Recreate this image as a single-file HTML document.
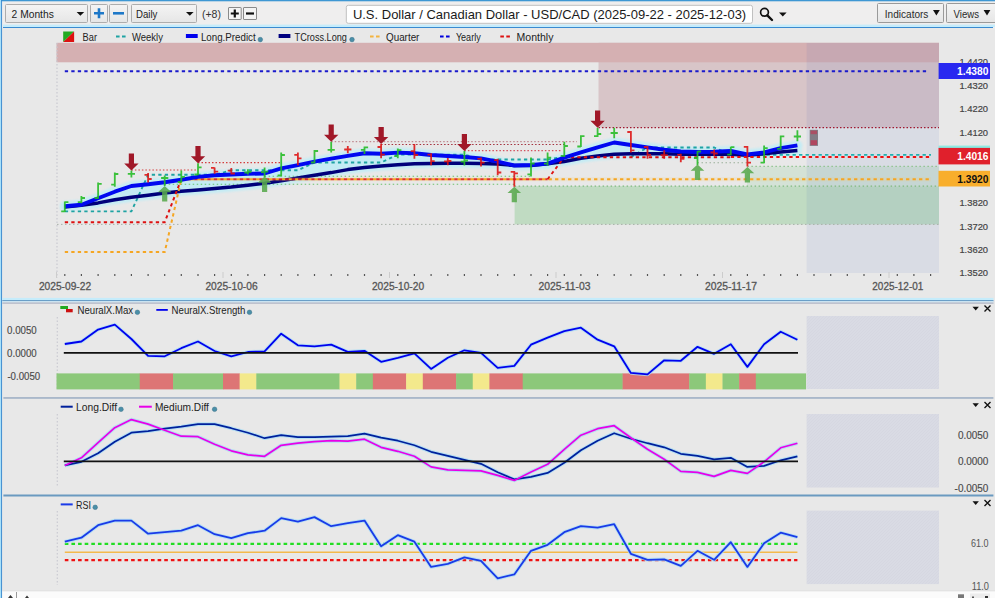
<!DOCTYPE html>
<html><head><meta charset="utf-8"><title>USD/CAD chart</title>
<style>html,body{margin:0;padding:0;background:#e8e8e8;overflow:hidden}svg text{font-family:"Liberation Sans",sans-serif}</style></head>
<body>
<svg width="995" height="598" viewBox="0 0 995 598" style="display:block">
<defs><pattern id="hatch" width="3" height="3" patternUnits="userSpaceOnUse"><rect width="3" height="3" fill="#d9dbe4"/><path d="M0,3 L3,0" stroke="#d3d5df" stroke-width="0.6"/></pattern>
<filter id="soft" x="-5%" y="-5%" width="110%" height="110%"><feGaussianBlur stdDeviation="0.45"/></filter>
<filter id="glow" x="-5%" y="-50%" width="110%" height="200%"><feGaussianBlur stdDeviation="1.2"/></filter>
<linearGradient id="btn" x1="0" y1="0" x2="0" y2="1"><stop offset="0" stop-color="#f4f4f4"/><stop offset="1" stop-color="#e6e6e6"/></linearGradient></defs>
<rect x="0" y="0" width="995" height="598" fill="#e8e8e8"/>
<rect x="0" y="0" width="995" height="28" fill="#efeeee"/>
<rect x="0" y="0" width="995" height="1.3" fill="#3e97d3"/>
<rect x="3" y="24.6" width="992" height="2.4" fill="#c5ecfb"/>
<rect x="3" y="27" width="990" height="1" fill="#3a8ad0"/>
<rect x="0" y="0" width="1.1" height="598" fill="#a8e1fa"/>
<rect x="1.1" y="0" width="0.95" height="598" fill="#3a8ad0"/>
<rect x="5.5" y="4.5" width="82" height="18" rx="1" fill="url(#btn)" stroke="#adadad" stroke-width="1"/>
<text x="11.6" y="17.8" font-family="Liberation Sans, sans-serif" font-size="11.5" fill="#222" text-anchor="start" font-weight="normal" textLength="42.2" lengthAdjust="spacingAndGlyphs" >2 Months</text>
<path d="M76.6,12 L84.2,12 L80.4,15.8 Z" fill="#111"/>
<rect x="90.5" y="4.5" width="17" height="18" rx="1" fill="url(#btn)" stroke="#adadad" stroke-width="1"/>
<path d="M94,13.3 H104 M99,8.3 V18.3" stroke="#1e78c8" stroke-width="2.6"/>
<rect x="109.5" y="4.5" width="18" height="18" rx="1" fill="url(#btn)" stroke="#adadad" stroke-width="1"/>
<path d="M113,13.3 H124" stroke="#1e78c8" stroke-width="2.6"/>
<rect x="131.5" y="4.5" width="65" height="18" rx="1" fill="url(#btn)" stroke="#adadad" stroke-width="1"/>
<text x="136.0" y="17.8" font-family="Liberation Sans, sans-serif" font-size="11.5" fill="#222" text-anchor="start" font-weight="normal" textLength="21.4" lengthAdjust="spacingAndGlyphs" >Daily</text>
<path d="M186,12 L193.6,12 L189.8,15.8 Z" fill="#111"/>
<text x="201.9" y="17.5" font-family="Liberation Sans, sans-serif" font-size="10.5" fill="#333" text-anchor="start" font-weight="normal" textLength="19.0" lengthAdjust="spacingAndGlyphs" >(+8)</text>
<rect x="228.5" y="7.5" width="12.7" height="12" rx="0.5" fill="#f4f4f4" stroke="#8a8a8a" stroke-width="1"/>
<path d="M230.8,13.5 H238.8 M234.8,9.5 V17.5" stroke="#111" stroke-width="2.2"/>
<rect x="243.5" y="7.5" width="13" height="12" rx="0.5" fill="#f4f4f4" stroke="#8a8a8a" stroke-width="1"/>
<path d="M246,13.5 H254" stroke="#111" stroke-width="2.2"/>
<rect x="346.3" y="5.3" width="406.2" height="18" rx="2" fill="#ffffff" stroke="#c0c0c0" stroke-width="1"/>
<text x="352.9" y="19.4" font-family="Liberation Sans, sans-serif" font-size="13" fill="#1a1a1a" text-anchor="start" font-weight="normal" textLength="393.3" lengthAdjust="spacingAndGlyphs" >U.S. Dollar / Canadian Dollar - USD/CAD (2025-09-22 - 2025-12-03)</text>
<circle cx="764.5" cy="12.3" r="3.9" fill="none" stroke="#111" stroke-width="1.7"/><path d="M767.3,15.3 L772,20" stroke="#111" stroke-width="2.4" stroke-linecap="round"/>
<path d="M779,12.6 L786.6,12.6 L782.8,16.4 Z" fill="#111"/>
<rect x="877.5" y="3.5" width="66" height="19" rx="1" fill="url(#btn)" stroke="#9a9a9a" stroke-width="1"/>
<text x="884.8" y="17.8" font-family="Liberation Sans, sans-serif" font-size="10.5" fill="#2a2a2a" text-anchor="start" font-weight="normal" textLength="43.6" lengthAdjust="spacingAndGlyphs" >Indicators</text>
<path d="M933,10 L939.8,10 L936.4,15.6 Z" fill="#111"/>
<rect x="946.5" y="3.5" width="52" height="19" rx="1" fill="url(#btn)" stroke="#9a9a9a" stroke-width="1"/>
<text x="953.6" y="17.8" font-family="Liberation Sans, sans-serif" font-size="10.5" fill="#2a2a2a" text-anchor="start" font-weight="normal" textLength="25.5" lengthAdjust="spacingAndGlyphs" >Views</text>
<path d="M983.6,10 L990.4,10 L987,15.6 Z" fill="#111"/>
<path d="M63.2,31.6 H74.1 L63.2,42 Z" fill="#22aa22"/><path d="M74.1,31.6 V42 H63.2 Z" fill="#dd1111"/>
<text x="82.6" y="40.8" font-family="Liberation Sans, sans-serif" font-size="10.5" fill="#222" text-anchor="start" font-weight="normal" textLength="14.4" lengthAdjust="spacingAndGlyphs" >Bar</text>
<path d="M116,36.5 h3.6 m2.4,0 h3.6" stroke="#1fa3a3" stroke-width="2"/>
<text x="131.9" y="40.8" font-family="Liberation Sans, sans-serif" font-size="10.5" fill="#222" text-anchor="start" font-weight="normal" textLength="31.0" lengthAdjust="spacingAndGlyphs" >Weekly</text>
<rect x="185.9" y="34" width="11.8" height="4" fill="#0000ee"/>
<text x="200.9" y="40.8" font-family="Liberation Sans, sans-serif" font-size="10.5" fill="#222" text-anchor="start" font-weight="normal" textLength="54.8" lengthAdjust="spacingAndGlyphs" >Long.Predict</text>
<circle cx="260.3" cy="39.6" r="2.3" fill="#4a8fa8" stroke="#3a7088" stroke-width="0.5"/>
<rect x="278.6" y="34" width="11.8" height="4" fill="#000080"/>
<text x="294.6" y="40.8" font-family="Liberation Sans, sans-serif" font-size="10.5" fill="#222" text-anchor="start" font-weight="normal" textLength="52.3" lengthAdjust="spacingAndGlyphs" >TCross.Long</text>
<circle cx="352" cy="39.6" r="2.3" fill="#4a8fa8" stroke="#3a7088" stroke-width="0.5"/>
<path d="M370,36.5 h3.6 m2.4,0 h3.6" stroke="#f3b440" stroke-width="2"/>
<text x="386.0" y="40.8" font-family="Liberation Sans, sans-serif" font-size="10.5" fill="#222" text-anchor="start" font-weight="normal" textLength="33.4" lengthAdjust="spacingAndGlyphs" >Quarter</text>
<path d="M440,36.5 h3.6 m2.4,0 h3.6" stroke="#0000dd" stroke-width="2"/>
<text x="455.9" y="40.8" font-family="Liberation Sans, sans-serif" font-size="10.5" fill="#222" text-anchor="start" font-weight="normal" textLength="24.8" lengthAdjust="spacingAndGlyphs" >Yearly</text>
<path d="M500.3,36.5 h3.6 m2.4,0 h3.6" stroke="#dd1111" stroke-width="2"/>
<text x="516.6" y="40.8" font-family="Liberation Sans, sans-serif" font-size="10.5" fill="#222" text-anchor="start" font-weight="normal" textLength="36.8" lengthAdjust="spacingAndGlyphs" >Monthly</text>
<rect x="598.5" y="42.8" width="340.5" height="84.9" fill="#d8c5c8"/>
<rect x="56.5" y="42.8" width="882.5" height="19.5" fill="#d5b0b2"/>
<rect x="514.6" y="186.2" width="424.4" height="38.2" fill="#c0dbc2"/>
<rect x="747" y="166.4" width="192" height="19.8" fill="#d4e2d6"/>
<rect x="806.6" y="43" width="132.39999999999998" height="230" fill="#143cb0" fill-opacity="0.065"/>
<path d="M57,43 V278" stroke="#c8c8d0" stroke-width="1.2" stroke-dasharray="1.5,2"/>
<path d="M57,224.4 H939" stroke="#a8b0a8" stroke-width="1" stroke-dasharray="1.5,2.5"/>
<path d="M598.5,127.7 H939" stroke="#a01830" stroke-width="1.3" stroke-dasharray="1.5,2"/>
<path d="M514.6,186.2 H939" stroke="#7fba7f" stroke-width="1.2" stroke-dasharray="1.5,2.5"/>
<path d="M747.4,166.4 H939" stroke="#8fc48f" stroke-width="1.2" stroke-dasharray="1.5,2.5"/>
<path d="M697.5,162.7 H747.4" stroke="#9ab09a" stroke-width="1.1" stroke-dasharray="1.5,2.5"/>
<g filter="url(#glow)" opacity="0.95"><polygon points="64.8,206.2 81.4,204.7 98.1,198.3 114.8,191.7 131.4,186.0 148.1,184.2 164.7,182.2 181.3,179.7 198.0,176.9 214.6,175.2 231.3,174.5 247.9,173.8 264.6,173.5 281.2,168.4 297.9,165.2 314.5,161.7 331.2,158.6 347.8,155.8 364.5,153.3 381.1,153.7 397.8,152.6 414.4,153.2 431.1,155.0 447.8,156.0 464.4,157.0 481.0,158.4 497.7,161.7 514.3,165.5 531.0,165.0 547.6,163.6 564.3,157.7 580.9,152.4 597.6,147.4 614.2,142.5 630.9,145.0 647.5,147.4 664.2,149.8 680.8,151.5 697.5,152.0 714.1,151.7 730.8,151.0 747.4,154.5 764.1,152.4 780.7,148.2 797.4,145.4 797.4,150.6 780.7,152.0 764.1,153.8 747.4,155.3 730.8,154.2 714.1,154.2 697.5,154.3 680.8,154.3 664.2,153.8 647.5,153.8 630.9,153.8 614.2,154.2 597.6,155.9 580.9,158.3 564.3,161.5 547.6,163.8 531.0,165.5 514.3,165.5 497.7,164.0 481.0,163.5 464.4,163.3 447.8,163.3 431.1,163.5 414.4,163.8 397.8,164.7 381.1,165.9 364.5,167.5 347.8,169.6 331.2,172.6 314.5,175.2 297.9,178.0 281.2,180.8 264.6,183.3 247.9,185.3 231.3,187.1 214.6,188.5 198.0,190.0 181.3,191.2 164.7,193.0 148.1,195.2 131.4,197.3 114.8,199.7 98.1,202.9 81.4,205.3 64.8,207.1" fill="#c2ecf5"/>
<polyline points="64.8,207.1 81.4,205.3 98.1,202.9 114.8,199.7 131.4,197.3 148.1,195.2 164.7,193.0 181.3,191.2 198.0,190.0 214.6,188.5 231.3,187.1 247.9,185.3 264.6,183.3 281.2,180.8 297.9,178.0 314.5,175.2 331.2,172.6 347.8,169.6 364.5,167.5 381.1,165.9 397.8,164.7 414.4,163.8 431.1,163.5 447.8,163.3 464.4,163.3 481.0,163.5 497.7,164.0 514.3,165.5 531.0,165.5 547.6,163.8 564.3,161.5 580.9,158.3 597.6,155.9 614.2,154.2 630.9,153.8 647.5,153.8 664.2,153.8 680.8,154.3 697.5,154.3 714.1,154.2 730.8,154.2 747.4,155.3 764.1,153.8 780.7,152.0 797.4,150.6" fill="none" stroke="#c2ecf5" stroke-width="9" stroke-linejoin="round" stroke-linecap="round"/>
<polyline points="64.8,206.2 81.4,204.7 98.1,198.3 114.8,191.7 131.4,186.0 148.1,184.2 164.7,182.2 181.3,179.7 198.0,176.9 214.6,175.2 231.3,174.5 247.9,173.8 264.6,173.5 281.2,168.4 297.9,165.2 314.5,161.7 331.2,158.6 347.8,155.8 364.5,153.3 381.1,153.7 397.8,152.6 414.4,153.2 431.1,155.0 447.8,156.0 464.4,157.0 481.0,158.4 497.7,161.7 514.3,165.5 531.0,165.0 547.6,163.6 564.3,157.7 580.9,152.4 597.6,147.4 614.2,142.5 630.9,145.0 647.5,147.4 664.2,149.8 680.8,151.5 697.5,152.0 714.1,151.7 730.8,151.0 747.4,154.5 764.1,152.4 780.7,148.2 797.4,145.4" fill="none" stroke="#c2ecf5" stroke-width="10" stroke-linejoin="round" stroke-linecap="round"/></g>
<path d="M131.4,170 H198.0" stroke="#d02020" stroke-width="1.1" stroke-dasharray="1.5,2" opacity="0.85"/>
<path d="M198.0,162.6 H281.2" stroke="#d02020" stroke-width="1.1" stroke-dasharray="1.5,2" opacity="0.85"/>
<path d="M331.2,141.6 H576.9" stroke="#b87880" stroke-width="1.1" stroke-dasharray="1.5,2" opacity="0.85"/>
<path d="M381.1,144.5 H564.3" stroke="#981020" stroke-width="1.1" stroke-dasharray="1.5,2" opacity="0.85"/>
<path d="M464.4,150.6 H562.3" stroke="#d03848" stroke-width="1.1" stroke-dasharray="1.5,2" opacity="0.85"/>
<path d="M164.7,184.3 H514.3" stroke="#55bb55" stroke-width="1.1" stroke-dasharray="1.5,2.5" opacity="0.85"/>
<path d="M264.6,176.2 H531.0" stroke="#55bb55" stroke-width="1.1" stroke-dasharray="1.5,2.5" opacity="0.85"/>
<path d="M64.8,211.4 H131.4 L148.1,174.8 H214.6 L231.3,170.3 H297.9 L314.5,162.5 H381.1 L397.8,154.6 H464.4 L481.0,159.5 H547.6" fill="none" stroke="#1fa3a3" stroke-width="1.9" stroke-dasharray="3.3,3.2"/>
<path d="M547.6,159.5 L564.3,157" fill="none" stroke="#1fa3a3" stroke-width="1.9" stroke-dasharray="3.3,3.2"/>
<path d="M630.9,157 L647.5,147.5 H714.1 L730.8,154.8" fill="none" stroke="#1fa3a3" stroke-width="1.9" stroke-dasharray="3.3,3.2"/>
<path d="M730.8,154.8 H931" fill="none" stroke="#1fb0b0" stroke-width="1.8" stroke-dasharray="3.3,3.2" stroke-dashoffset="3.25"/>
<polyline points="64.8,207.1 81.4,205.3 98.1,202.9 114.8,199.7 131.4,197.3 148.1,195.2 164.7,193.0 181.3,191.2 198.0,190.0 214.6,188.5 231.3,187.1 247.9,185.3 264.6,183.3 281.2,180.8 297.9,178.0 314.5,175.2 331.2,172.6 347.8,169.6 364.5,167.5 381.1,165.9 397.8,164.7 414.4,163.8 431.1,163.5 447.8,163.3 464.4,163.3 481.0,163.5 497.7,164.0 514.3,165.5 531.0,165.5 547.6,163.8 564.3,161.5 580.9,158.3 597.6,155.9 614.2,154.2 630.9,153.8 647.5,153.8 664.2,153.8 680.8,154.3 697.5,154.3 714.1,154.2 730.8,154.2 747.4,155.3 764.1,153.8 780.7,152.0 797.4,150.6" fill="none" stroke="#00007a" stroke-width="3.5" stroke-linejoin="round" stroke-linecap="butt"/>
<path d="M64.8,252.1 H164.7 L181.3,179.2" fill="none" stroke="#f5a623" stroke-width="2" stroke-dasharray="3.3,3.2"/>
<path d="M181.3,179.2 H931" fill="none" stroke="#f9c86a" stroke-width="4" opacity="0.18"/>
<path d="M181.3,179.2 H931" fill="none" stroke="#f5a623" stroke-width="2" stroke-dasharray="3.3,3.2" stroke-dashoffset="3.25"/>
<path d="M64.8,71.2 H928" fill="none" stroke="#1a1acc" stroke-width="1.9" stroke-dasharray="3.3,3.2"/>
<path d="M64.8,222.3 H164.7 L181.3,179.2" fill="none" stroke="#dd1111" stroke-width="2" stroke-dasharray="3.3,3.2"/>
<path d="M181.3,179.2 H547.6" fill="none" stroke="#dd1111" stroke-width="1.9" stroke-dasharray="3.3,3.2" opacity="0.85"/>
<path d="M547.6,179.2 L564.3,157.2" fill="none" stroke="#dd1111" stroke-width="1.8" stroke-dasharray="3.3,3.2"/>
<path d="M564.3,157.2 H730.8" fill="none" stroke="#dd1111" stroke-width="2" stroke-dasharray="3.3,3.2"/>
<path d="M730.8,157 H931" fill="none" stroke="#ee1111" stroke-width="2" stroke-dasharray="3.3,3.2"/>
<polyline points="64.8,206.2 81.4,204.7 98.1,198.3 114.8,191.7 131.4,186.0 148.1,184.2 164.7,182.2 181.3,179.7 198.0,176.9 214.6,175.2 231.3,174.5 247.9,173.8 264.6,173.5 281.2,168.4 297.9,165.2 314.5,161.7 331.2,158.6 347.8,155.8 364.5,153.3 381.1,153.7 397.8,152.6 414.4,153.2 431.1,155.0 447.8,156.0 464.4,157.0 481.0,158.4 497.7,161.7 514.3,165.5 531.0,165.0 547.6,163.6 564.3,157.7 580.9,152.4 597.6,147.4 614.2,142.5 630.9,145.0 647.5,147.4 664.2,149.8 680.8,151.5 697.5,152.0 714.1,151.7 730.8,151.0 747.4,154.5 764.1,152.4 780.7,148.2 797.4,145.4" fill="none" stroke="#0008f0" stroke-width="3.9" stroke-linejoin="round" stroke-linecap="butt"/>
<path d="M64.8,201.5 V212 M61.2,211.4 H64.8 M64.8,202.2 H68.4" stroke="#22bb22" stroke-width="1.8" fill="none" opacity="0.88"/>
<path d="M81.4,195.9 V203.3 M77.8,202.2 H81.4 M81.4,198 H85.0" stroke="#22bb22" stroke-width="1.8" fill="none" opacity="0.88"/>
<path d="M98.1,182.5 V198.7 M94.5,198 H98.1 M98.1,183.9 H101.7" stroke="#22bb22" stroke-width="1.8" fill="none" opacity="0.88"/>
<path d="M114.8,172.4 V186.7 M111.2,184.6 H114.8 M114.8,174 H118.3" stroke="#22bb22" stroke-width="1.8" fill="none" opacity="0.88"/>
<path d="M131.4,170.6 V177.6 M127.8,173.8 H131.4 M131.4,173.8 H135.0" stroke="#22bb22" stroke-width="1.8" fill="none" opacity="0.88"/>
<path d="M148.1,173 V182.5 M144.5,174.8 H148.1 M148.1,179 H151.7" stroke="#dd1111" stroke-width="1.8" fill="none" opacity="0.88"/>
<path d="M164.7,175.5 V186 M161.1,178 H164.7 M164.7,178 H168.3" stroke="#22bb22" stroke-width="1.8" fill="none" opacity="0.88"/>
<path d="M181.3,170.6 V182.5 M177.7,182 H181.3 M181.3,176.9 H184.9" stroke="#22bb22" stroke-width="1.8" fill="none" opacity="0.88"/>
<path d="M198.0,163.2 V175.2 M194.4,174.5 H198.0 M198.0,167.4 H201.6" stroke="#22bb22" stroke-width="1.8" fill="none" opacity="0.88"/>
<path d="M214.6,167.4 V173.8 M211.0,167.9 H214.6 M214.6,171.7 H218.2" stroke="#dd1111" stroke-width="1.8" fill="none" opacity="0.88"/>
<path d="M231.3,168.1 V174.5 M227.7,170.7 H231.3 M231.3,173.5 H234.9" stroke="#dd1111" stroke-width="1.8" fill="none" opacity="0.88"/>
<path d="M247.9,169.3 V174.5 M244.3,172.5 H247.9 M247.9,171.8 H251.5" stroke="#22bb22" stroke-width="1.8" fill="none" opacity="0.88"/>
<path d="M264.6,167.4 V177 M261.0,172.2 H264.6 M264.6,171.7 H268.2" stroke="#22bb22" stroke-width="1.8" fill="none" opacity="0.88"/>
<path d="M281.2,152.4 V176 M277.6,175.5 H281.2 M281.2,155 H284.9" stroke="#22bb22" stroke-width="1.8" fill="none" opacity="0.88"/>
<path d="M297.9,152.4 V165.3 M294.3,154.8 H297.9 M297.9,158.3 H301.5" stroke="#dd1111" stroke-width="1.8" fill="none" opacity="0.88"/>
<path d="M314.5,150.1 V163.2 M310.9,162.5 H314.5 M314.5,151 H318.1" stroke="#22bb22" stroke-width="1.8" fill="none" opacity="0.88"/>
<path d="M331.2,141.8 V152.6 M327.6,149.8 H331.2 M331.2,149.8 H334.8" stroke="#22bb22" stroke-width="1.8" fill="none" opacity="0.88"/>
<path d="M347.8,146 V153.3 M344.2,149.5 H347.8 M347.8,149.5 H351.4" stroke="#dd1111" stroke-width="1.8" fill="none" opacity="0.88"/>
<path d="M364.5,146.5 V154 M360.9,149.8 H364.5 M364.5,147.4 H368.1" stroke="#22bb22" stroke-width="1.8" fill="none" opacity="0.88"/>
<path d="M381.1,144.1 V158.2 M377.5,147 H381.1 M381.1,154.7 H384.8" stroke="#dd1111" stroke-width="1.8" fill="none" opacity="0.88"/>
<path d="M397.8,148.4 V158.2 M394.2,156.1 H397.8 M397.8,150.2 H401.4" stroke="#22bb22" stroke-width="1.8" fill="none" opacity="0.88"/>
<path d="M414.4,144.1 V158.8 M410.8,151.1 H414.4 M414.4,155 H418.1" stroke="#dd1111" stroke-width="1.8" fill="none" opacity="0.88"/>
<path d="M431.1,153.2 V165.2 M427.5,154.6 H431.1 M431.1,161.2 H434.7" stroke="#dd1111" stroke-width="1.8" fill="none" opacity="0.88"/>
<path d="M447.8,158.1 V165.2 M444.1,161.3 H447.8 M447.8,161 H451.4" stroke="#dd1111" stroke-width="1.8" fill="none" opacity="0.88"/>
<path d="M464.4,151.1 V165.5 M460.8,161.7 H464.4 M464.4,160.5 H468.0" stroke="#22bb22" stroke-width="1.8" fill="none" opacity="0.88"/>
<path d="M481.0,157.4 V166.6 M477.4,158.8 H481.0 M481.0,162.6 H484.6" stroke="#dd1111" stroke-width="1.8" fill="none" opacity="0.88"/>
<path d="M497.7,158.8 V175.3 M494.1,160.2 H497.7 M497.7,172.5 H501.3" stroke="#dd1111" stroke-width="1.8" fill="none" opacity="0.88"/>
<path d="M514.3,171.1 V186.7 M510.7,171.9 H514.3 M514.3,173.3 H517.9" stroke="#dd1111" stroke-width="1.8" fill="none" opacity="0.88"/>
<path d="M531.0,157.4 V176.4 M527.4,174.3 H531.0 M531.0,163.5 H534.6" stroke="#22bb22" stroke-width="1.8" fill="none" opacity="0.88"/>
<path d="M547.6,152.4 V165.7 M544.0,163.6 H547.6 M547.6,157.7 H551.2" stroke="#22bb22" stroke-width="1.8" fill="none" opacity="0.88"/>
<path d="M564.3,141.8 V156.9 M560.7,155.9 H564.3 M564.3,146 H567.9" stroke="#22bb22" stroke-width="1.8" fill="none" opacity="0.88"/>
<path d="M580.9,135.2 V147 M577.3,146.5 H580.9 M580.9,136.2 H584.5" stroke="#22bb22" stroke-width="1.8" fill="none" opacity="0.88"/>
<path d="M597.6,127.7 V136.9 M594.0,136.2 H597.6 M597.6,134 H601.2" stroke="#22bb22" stroke-width="1.8" fill="none" opacity="0.88"/>
<path d="M614.2,127.7 V138.3 M610.6,133 H614.2 M614.2,133 H617.8" stroke="#22bb22" stroke-width="1.8" fill="none" opacity="0.88"/>
<path d="M630.9,131 V152.6 M627.3,132 H630.9 M630.9,150.3 H634.5" stroke="#dd1111" stroke-width="1.8" fill="none" opacity="0.88"/>
<path d="M647.5,146 V158.7 M643.9,147 H647.5 M647.5,154.9 H651.1" stroke="#dd1111" stroke-width="1.8" fill="none" opacity="0.88"/>
<path d="M664.2,150.3 V158.7 M660.6,155.2 H664.2 M664.2,155.2 H667.8" stroke="#dd1111" stroke-width="1.8" fill="none" opacity="0.88"/>
<path d="M680.8,153.8 V162.3 M677.2,154.8 H680.8 M680.8,158.8 H684.4" stroke="#dd1111" stroke-width="1.8" fill="none" opacity="0.88"/>
<path d="M697.5,151 V165 M693.9,158 H697.5 M697.5,151.5 H701.1" stroke="#22bb22" stroke-width="1.8" fill="none" opacity="0.88"/>
<path d="M714.1,149.6 V156 M710.5,152.5 H714.1 M714.1,153.5 H717.7" stroke="#dd1111" stroke-width="1.8" fill="none" opacity="0.88"/>
<path d="M730.8,146.8 V155.3 M727.2,154.6 H730.8 M730.8,147.2 H734.4" stroke="#22bb22" stroke-width="1.8" fill="none" opacity="0.88"/>
<path d="M747.4,146.1 V166.5 M743.8,146.8 H747.4 M747.4,162.7 H751.0" stroke="#dd1111" stroke-width="1.8" fill="none" opacity="0.88"/>
<path d="M764.1,145.4 V163.3 M760.5,162.7 H764.1 M764.1,148.2 H767.7" stroke="#22bb22" stroke-width="1.8" fill="none" opacity="0.88"/>
<path d="M780.7,135.6 V149.6 M777.1,148.9 H780.7 M780.7,136.3 H784.3" stroke="#22bb22" stroke-width="1.8" fill="none" opacity="0.88"/>
<path d="M797.4,130.3 V141.2 M793.8,136.5 H797.4 M797.4,136.5 H801.0" stroke="#22bb22" stroke-width="1.8" fill="none" opacity="0.88"/>
<path d="M128.8,153.4 H134.0 V163.6 H138.6 L131.4,170.6 L124.2,163.6 H128.8 Z" fill="#a01828"/>
<path d="M195.4,146.0 H200.6 V156.2 H205.2 L198.0,163.2 L190.8,156.2 H195.4 Z" fill="#a01828"/>
<path d="M328.6,124.6 H333.8 V134.8 H338.4 L331.2,141.8 L324.0,134.8 H328.6 Z" fill="#a01828"/>
<path d="M378.5,126.9 H383.8 V137.1 H388.3 L381.1,144.1 L373.9,137.1 H378.5 Z" fill="#a01828"/>
<path d="M461.8,133.9 H467.0 V144.1 H471.6 L464.4,151.1 L457.2,144.1 H461.8 Z" fill="#a01828"/>
<path d="M595.0,110.5 H600.2 V120.7 H604.8 L597.6,127.7 L590.4,120.7 H595.0 Z" fill="#a01828"/>
<path d="M162.1,201.6 H167.3 V192.3 H171.5 L164.7,186.0 L157.9,192.3 H162.1 Z" fill="#58a84c" fill-opacity="0.88"/>
<path d="M262.0,192.1 H267.2 V182.8 H271.4 L264.6,176.5 L257.8,182.8 H262.0 Z" fill="#58a84c" fill-opacity="0.88"/>
<path d="M511.7,202.3 H516.9 V193.0 H521.1 L514.3,186.7 L507.5,193.0 H511.7 Z" fill="#58a84c" fill-opacity="0.88"/>
<path d="M694.9,180.0 H700.1 V170.7 H704.3 L697.5,164.4 L690.7,170.7 H694.9 Z" fill="#58a84c" fill-opacity="0.88"/>
<path d="M744.8,182.5 H750.0 V173.2 H754.2 L747.4,166.9 L740.6,173.2 H744.8 Z" fill="#58a84c" fill-opacity="0.88"/>
<rect x="809.7" y="129.8" width="8.3" height="16.1" fill="#827d86"/><g filter="url(#soft)"><rect x="810.6" y="130.6" width="6.4" height="3.6" fill="#c4304e" opacity="0.6"/><rect x="810.6" y="140.2" width="6.4" height="4.9" fill="#c4304e" opacity="0.7"/></g>
<path d="M64.8,274 v2 M81.4,274 v2 M98.1,274 v2 M114.8,274 v2 M131.4,274 v2 M148.1,274 v2 M164.7,274 v2 M181.3,274 v2 M198.0,274 v2 M214.6,274 v2 M231.3,274 v2 M247.9,274 v2 M264.6,274 v2 M281.2,274 v2 M297.9,274 v2 M314.5,274 v2 M331.2,274 v2 M347.8,274 v2 M364.5,274 v2 M381.1,274 v2 M397.8,274 v2 M414.4,274 v2 M431.1,274 v2 M447.8,274 v2 M464.4,274 v2 M481.0,274 v2 M497.7,274 v2 M514.3,274 v2 M531.0,274 v2 M547.6,274 v2 M564.3,274 v2 M580.9,274 v2 M597.6,274 v2 M614.2,274 v2 M630.9,274 v2 M647.5,274 v2 M664.2,274 v2 M680.8,274 v2 M697.5,274 v2 M714.1,274 v2 M730.8,274 v2 M747.4,274 v2 M764.1,274 v2 M780.7,274 v2 M797.4,274 v2 M814.0,274 v2 M830.7,274 v2 M847.3,274 v2 M864.0,274 v2 M880.6,274 v2 M897.3,274 v2 M913.9,274 v2 M930.6,274 v2 " stroke="#555" stroke-width="1.2"/>
<path d="M56.5,272 v6 M223.0,272 v6 M389.5,272 v6 M556.0,272 v6 M722.5,272 v6 M889.0,272 v6 " stroke="#ccc" stroke-width="1"/>
<text x="38.9" y="290.4" font-family="Liberation Sans, sans-serif" font-size="10.8" fill="#555" text-anchor="start" font-weight="normal" textLength="52.2" lengthAdjust="spacingAndGlyphs" stroke="#555" stroke-width="0.3">2025-09-22</text>
<text x="205.4" y="290.4" font-family="Liberation Sans, sans-serif" font-size="10.8" fill="#555" text-anchor="start" font-weight="normal" textLength="52.2" lengthAdjust="spacingAndGlyphs" stroke="#555" stroke-width="0.3">2025-10-06</text>
<text x="371.9" y="290.4" font-family="Liberation Sans, sans-serif" font-size="10.8" fill="#555" text-anchor="start" font-weight="normal" textLength="52.2" lengthAdjust="spacingAndGlyphs" stroke="#555" stroke-width="0.3">2025-10-20</text>
<text x="538.4" y="290.4" font-family="Liberation Sans, sans-serif" font-size="10.8" fill="#555" text-anchor="start" font-weight="normal" textLength="52.2" lengthAdjust="spacingAndGlyphs" stroke="#555" stroke-width="0.3">2025-11-03</text>
<text x="704.9" y="290.4" font-family="Liberation Sans, sans-serif" font-size="10.8" fill="#555" text-anchor="start" font-weight="normal" textLength="52.2" lengthAdjust="spacingAndGlyphs" stroke="#555" stroke-width="0.3">2025-11-17</text>
<text x="872.3" y="290.4" font-family="Liberation Sans, sans-serif" font-size="10.8" fill="#555" text-anchor="start" font-weight="normal" textLength="51.0" lengthAdjust="spacingAndGlyphs" stroke="#555" stroke-width="0.3">2025-12-01</text>
<text x="959.4" y="65.4" font-family="Liberation Sans, sans-serif" font-size="9.8" fill="#444" text-anchor="start" font-weight="normal" textLength="28.7" lengthAdjust="spacingAndGlyphs" stroke="#444" stroke-width="0.2">1.4420</text>
<text x="959.4" y="88.8" font-family="Liberation Sans, sans-serif" font-size="9.8" fill="#444" text-anchor="start" font-weight="normal" textLength="28.7" lengthAdjust="spacingAndGlyphs" stroke="#444" stroke-width="0.2">1.4320</text>
<text x="959.4" y="112.3" font-family="Liberation Sans, sans-serif" font-size="9.8" fill="#444" text-anchor="start" font-weight="normal" textLength="28.7" lengthAdjust="spacingAndGlyphs" stroke="#444" stroke-width="0.2">1.4220</text>
<text x="959.4" y="135.7" font-family="Liberation Sans, sans-serif" font-size="9.8" fill="#444" text-anchor="start" font-weight="normal" textLength="28.7" lengthAdjust="spacingAndGlyphs" stroke="#444" stroke-width="0.2">1.4120</text>
<text x="959.4" y="206.0" font-family="Liberation Sans, sans-serif" font-size="9.8" fill="#444" text-anchor="start" font-weight="normal" textLength="28.7" lengthAdjust="spacingAndGlyphs" stroke="#444" stroke-width="0.2">1.3820</text>
<text x="959.4" y="229.5" font-family="Liberation Sans, sans-serif" font-size="9.8" fill="#444" text-anchor="start" font-weight="normal" textLength="28.7" lengthAdjust="spacingAndGlyphs" stroke="#444" stroke-width="0.2">1.3720</text>
<text x="959.4" y="252.9" font-family="Liberation Sans, sans-serif" font-size="9.8" fill="#444" text-anchor="start" font-weight="normal" textLength="28.7" lengthAdjust="spacingAndGlyphs" stroke="#444" stroke-width="0.2">1.3620</text>
<text x="959.4" y="276.4" font-family="Liberation Sans, sans-serif" font-size="9.8" fill="#444" text-anchor="start" font-weight="normal" textLength="28.7" lengthAdjust="spacingAndGlyphs" stroke="#444" stroke-width="0.2">1.3520</text>
<rect x="938.6" y="63" width="51.4" height="16" fill="#2828f0"/>
<text x="957.1" y="75" font-family="Liberation Sans, sans-serif" font-size="10" fill="#fff" text-anchor="start" font-weight="bold" textLength="31.3" lengthAdjust="spacingAndGlyphs" >1.4380</text>
<rect x="938.5" y="145.6" width="51.5" height="2.6" fill="#8eeae2"/>
<rect x="938.5" y="147.9" width="51.5" height="16.5" fill="#e0202c"/>
<text x="957.2" y="160.2" font-family="Liberation Sans, sans-serif" font-size="10" fill="#fff" text-anchor="start" font-weight="bold" textLength="31.3" lengthAdjust="spacingAndGlyphs" >1.4016</text>
<rect x="938.5" y="170.8" width="51.5" height="15.7" fill="#f8ae2c"/>
<text x="957.2" y="182.8" font-family="Liberation Sans, sans-serif" font-size="10" fill="#111" text-anchor="start" font-weight="bold" textLength="31.3" lengthAdjust="spacingAndGlyphs" >1.3920</text>
<rect x="2.3" y="297.90000000000003" width="991.2" height="2.4" fill="#c5ecfb"/>
<rect x="2.3" y="300.3" width="991.2" height="1" fill="#3a7fb8"/>
<rect x="2.3" y="301.3" width="991.2" height="1.2" fill="#d6eefa"/>
<rect x="2.3" y="302.40000000000003" width="991.2" height="1.4" fill="#b4b9c8"/>
<path d="M972.5,306.8 h6.4 l-3.2,3.8 Z" fill="#111"/>
<path d="M984.5,305.6 l6,6 m0,-6 l-6,6" stroke="#111" stroke-width="1.35"/>
<rect x="60.3" y="306" width="7.7" height="3" fill="#22aa22"/><rect x="66" y="309" width="6.7" height="3.3" fill="#cc1111"/>
<text x="77.5" y="314" font-family="Liberation Sans, sans-serif" font-size="10.5" fill="#222" text-anchor="start" font-weight="normal" textLength="55.6" lengthAdjust="spacingAndGlyphs" >NeuralX.Max</text>
<circle cx="137.4" cy="312.3" r="2.3" fill="#4a8fa8" stroke="#3a7088" stroke-width="0.5"/>
<rect x="156.3" y="309" width="11.5" height="1.8" fill="#0000ee"/>
<text x="171.6" y="314" font-family="Liberation Sans, sans-serif" font-size="10.5" fill="#222" text-anchor="start" font-weight="normal" textLength="73.8" lengthAdjust="spacingAndGlyphs" >NeuralX.Strength</text>
<circle cx="249.5" cy="312.3" r="2.3" fill="#4a8fa8" stroke="#3a7088" stroke-width="0.5"/>
<path d="M57.3,317 V389" stroke="#cacad2" stroke-width="1.2" stroke-dasharray="1.5,2"/>
<rect x="806.6" y="316" width="132.4" height="73" fill="url(#hatch)"/>
<rect x="56.50" y="373.4" width="83.55" height="16" fill="#8cc87a"/>
<rect x="139.75" y="373.4" width="33.60" height="16" fill="#dd7575"/>
<rect x="173.05" y="373.4" width="50.25" height="16" fill="#8cc87a"/>
<rect x="223.00" y="373.4" width="16.95" height="16" fill="#dd7575"/>
<rect x="239.65" y="373.4" width="16.95" height="16" fill="#f3e98c"/>
<rect x="256.30" y="373.4" width="83.55" height="16" fill="#8cc87a"/>
<rect x="339.55" y="373.4" width="16.95" height="16" fill="#f3e98c"/>
<rect x="356.20" y="373.4" width="16.95" height="16" fill="#8cc87a"/>
<rect x="372.85" y="373.4" width="33.60" height="16" fill="#dd7575"/>
<rect x="406.15" y="373.4" width="16.95" height="16" fill="#f3e98c"/>
<rect x="422.80" y="373.4" width="33.60" height="16" fill="#dd7575"/>
<rect x="456.10" y="373.4" width="16.95" height="16" fill="#8cc87a"/>
<rect x="472.75" y="373.4" width="16.95" height="16" fill="#f3e98c"/>
<rect x="489.40" y="373.4" width="33.60" height="16" fill="#dd7575"/>
<rect x="522.70" y="373.4" width="100.20" height="16" fill="#8cc87a"/>
<rect x="622.60" y="373.4" width="66.90" height="16" fill="#dd7575"/>
<rect x="689.20" y="373.4" width="16.95" height="16" fill="#8cc87a"/>
<rect x="705.85" y="373.4" width="16.95" height="16" fill="#f3e98c"/>
<rect x="722.50" y="373.4" width="16.95" height="16" fill="#8cc87a"/>
<rect x="739.15" y="373.4" width="16.95" height="16" fill="#dd7575"/>
<rect x="755.80" y="373.4" width="50.25" height="16" fill="#8cc87a"/>
<polyline points="64.8,344.0 81.4,341.5 98.1,329.6 114.8,324.6 131.4,339.0 148.1,355.8 164.7,356.3 181.3,348.2 198.0,341.5 214.6,351.0 231.3,356.3 247.9,352.0 264.6,351.3 281.2,333.7 297.9,345.3 314.5,346.3 331.2,344.7 347.8,351.8 364.5,350.8 381.1,361.8 397.8,357.8 414.4,353.3 431.1,368.9 447.8,357.8 464.4,350.3 481.0,352.8 497.7,367.9 514.3,365.9 531.0,344.7 547.6,337.7 564.3,331.2 580.9,327.7 597.6,339.7 614.2,346.3 630.9,372.9 647.5,374.4 664.2,360.3 680.8,360.8 697.5,346.8 714.1,353.8 730.8,344.2 747.4,366.9 764.1,344.2 780.7,331.7 797.4,339.7" fill="none" stroke="#a8dcf5" stroke-width="3.6" stroke-linejoin="round" opacity="0.8"/>
<polyline points="64.8,344.0 81.4,341.5 98.1,329.6 114.8,324.6 131.4,339.0 148.1,355.8 164.7,356.3 181.3,348.2 198.0,341.5 214.6,351.0 231.3,356.3 247.9,352.0 264.6,351.3 281.2,333.7 297.9,345.3 314.5,346.3 331.2,344.7 347.8,351.8 364.5,350.8 381.1,361.8 397.8,357.8 414.4,353.3 431.1,368.9 447.8,357.8 464.4,350.3 481.0,352.8 497.7,367.9 514.3,365.9 531.0,344.7 547.6,337.7 564.3,331.2 580.9,327.7 597.6,339.7 614.2,346.3 630.9,372.9 647.5,374.4 664.2,360.3 680.8,360.8 697.5,346.8 714.1,353.8 730.8,344.2 747.4,366.9 764.1,344.2 780.7,331.7 797.4,339.7" fill="none" stroke="#0000ee" stroke-width="1.8" stroke-linejoin="round"/>
<path d="M63.8,352.8 H798.0" stroke="#111" stroke-width="1.7"/>
<text x="7.1" y="333.9" font-family="Liberation Sans, sans-serif" font-size="10" fill="#4a4a4a" text-anchor="start" font-weight="normal" textLength="29.6" lengthAdjust="spacingAndGlyphs" stroke="#4a4a4a" stroke-width="0.15">0.0050</text>
<text x="7.1" y="356.9" font-family="Liberation Sans, sans-serif" font-size="10" fill="#4a4a4a" text-anchor="start" font-weight="normal" textLength="29.6" lengthAdjust="spacingAndGlyphs" stroke="#4a4a4a" stroke-width="0.15">0.0000</text>
<text x="7.4" y="380.09999999999997" font-family="Liberation Sans, sans-serif" font-size="10" fill="#4a4a4a" text-anchor="start" font-weight="normal" textLength="32.8" lengthAdjust="spacingAndGlyphs" stroke="#4a4a4a" stroke-width="0.15">-0.0050</text>
<rect x="3.4" y="397.1" width="990" height="1.7" fill="#a3b3c7"/>
<path d="M972.5,403.2 h6.4 l-3.2,3.8 Z" fill="#111"/>
<path d="M984.5,402 l6,6 m0,-6 l-6,6" stroke="#111" stroke-width="1.35"/>
<rect x="60.7" y="405.7" width="12" height="2" fill="#00209c"/>
<text x="76.0" y="410.7" font-family="Liberation Sans, sans-serif" font-size="10.5" fill="#222" text-anchor="start" font-weight="normal" textLength="41.0" lengthAdjust="spacingAndGlyphs" >Long.Diff</text>
<circle cx="121" cy="409.3" r="2.3" fill="#4a8fa8" stroke="#3a7088" stroke-width="0.5"/>
<rect x="139" y="405.7" width="12.8" height="2" fill="#e800e8"/>
<text x="154.9" y="410.7" font-family="Liberation Sans, sans-serif" font-size="10.5" fill="#222" text-anchor="start" font-weight="normal" textLength="54.0" lengthAdjust="spacingAndGlyphs" >Medium.Diff</text>
<circle cx="214.6" cy="409.3" r="2.3" fill="#4a8fa8" stroke="#3a7088" stroke-width="0.5"/>
<path d="M57.3,414 V487" stroke="#cacad2" stroke-width="1.2" stroke-dasharray="1.5,2"/>
<rect x="806.6" y="414" width="132.4" height="73.5" fill="url(#hatch)"/>
<polyline points="64.8,465.4 81.4,461.8 98.1,453.3 114.8,441.7 131.4,432.7 148.1,431.2 164.7,428.7 181.3,426.7 198.0,424.1 214.6,424.1 231.3,428.2 247.9,432.7 264.6,438.2 281.2,435.2 297.9,437.2 314.5,437.2 331.2,436.7 347.8,436.2 364.5,433.7 381.1,437.7 397.8,440.7 414.4,445.3 431.1,451.8 447.8,455.8 464.4,459.8 481.0,463.8 497.7,472.2 514.3,479.4 531.0,476.9 547.6,472.9 564.3,462.8 580.9,450.3 597.6,440.7 614.2,433.2 630.9,438.7 647.5,443.2 664.2,447.3 680.8,453.8 697.5,455.8 714.1,459.3 730.8,457.8 747.4,466.9 764.1,465.9 780.7,460.3 797.4,456.3" fill="none" stroke="#a8dcf5" stroke-width="3.6" stroke-linejoin="round" opacity="0.8"/>
<polyline points="64.8,465.4 81.4,457.8 98.1,442.7 114.8,427.7 131.4,419.6 148.1,424.1 164.7,430.2 181.3,436.2 198.0,436.7 214.6,444.2 231.3,450.8 247.9,454.8 264.6,456.3 281.2,445.3 297.9,443.2 314.5,441.7 331.2,440.7 347.8,441.2 364.5,439.2 381.1,447.3 397.8,451.3 414.4,456.3 431.1,466.9 447.8,469.9 464.4,470.4 481.0,470.9 497.7,475.4 514.3,480.4 531.0,471.9 547.6,464.3 564.3,449.3 580.9,435.2 597.6,428.7 614.2,425.7 630.9,437.7 647.5,449.3 664.2,459.3 680.8,471.4 697.5,472.4 714.1,476.4 730.8,470.4 747.4,473.4 764.1,461.8 780.7,447.8 797.4,443.2" fill="none" stroke="#a8dcf5" stroke-width="3.6" stroke-linejoin="round" opacity="0.8"/>
<polyline points="64.8,465.4 81.4,461.8 98.1,453.3 114.8,441.7 131.4,432.7 148.1,431.2 164.7,428.7 181.3,426.7 198.0,424.1 214.6,424.1 231.3,428.2 247.9,432.7 264.6,438.2 281.2,435.2 297.9,437.2 314.5,437.2 331.2,436.7 347.8,436.2 364.5,433.7 381.1,437.7 397.8,440.7 414.4,445.3 431.1,451.8 447.8,455.8 464.4,459.8 481.0,463.8 497.7,472.2 514.3,479.4 531.0,476.9 547.6,472.9 564.3,462.8 580.9,450.3 597.6,440.7 614.2,433.2 630.9,438.7 647.5,443.2 664.2,447.3 680.8,453.8 697.5,455.8 714.1,459.3 730.8,457.8 747.4,466.9 764.1,465.9 780.7,460.3 797.4,456.3" fill="none" stroke="#00209c" stroke-width="1.7" stroke-linejoin="round"/>
<polyline points="64.8,465.4 81.4,457.8 98.1,442.7 114.8,427.7 131.4,419.6 148.1,424.1 164.7,430.2 181.3,436.2 198.0,436.7 214.6,444.2 231.3,450.8 247.9,454.8 264.6,456.3 281.2,445.3 297.9,443.2 314.5,441.7 331.2,440.7 347.8,441.2 364.5,439.2 381.1,447.3 397.8,451.3 414.4,456.3 431.1,466.9 447.8,469.9 464.4,470.4 481.0,470.9 497.7,475.4 514.3,480.4 531.0,471.9 547.6,464.3 564.3,449.3 580.9,435.2 597.6,428.7 614.2,425.7 630.9,437.7 647.5,449.3 664.2,459.3 680.8,471.4 697.5,472.4 714.1,476.4 730.8,470.4 747.4,473.4 764.1,461.8 780.7,447.8 797.4,443.2" fill="none" stroke="#e800e8" stroke-width="1.7" stroke-linejoin="round"/>
<path d="M63.8,461.3 H798.0" stroke="#111" stroke-width="1.7"/>
<text x="957.9" y="438.79999999999995" font-family="Liberation Sans, sans-serif" font-size="10" fill="#4a4a4a" text-anchor="start" font-weight="normal" textLength="30.5" lengthAdjust="spacingAndGlyphs" stroke="#4a4a4a" stroke-width="0.15">0.0050</text>
<text x="957.9" y="465.4" font-family="Liberation Sans, sans-serif" font-size="10" fill="#4a4a4a" text-anchor="start" font-weight="normal" textLength="30.5" lengthAdjust="spacingAndGlyphs" stroke="#4a4a4a" stroke-width="0.15">0.0000</text>
<text x="954.6" y="492.09999999999997" font-family="Liberation Sans, sans-serif" font-size="10" fill="#4a4a4a" text-anchor="start" font-weight="normal" textLength="33.8" lengthAdjust="spacingAndGlyphs" stroke="#4a4a4a" stroke-width="0.15">-0.0050</text>
<rect x="3.4" y="494.5" width="990" height="2" fill="#6a9ac0"/>
<path d="M972.5,501.2 h6.4 l-3.2,3.8 Z" fill="#111"/>
<path d="M984.5,500 l6,6 m0,-6 l-6,6" stroke="#111" stroke-width="1.35"/>
<rect x="60.7" y="503.4" width="12" height="2" fill="#1a3ae8"/>
<text x="76.0" y="508.5" font-family="Liberation Sans, sans-serif" font-size="10.5" fill="#222" text-anchor="start" font-weight="normal" textLength="14.9" lengthAdjust="spacingAndGlyphs" >RSI</text>
<circle cx="95.2" cy="507.3" r="2.3" fill="#4a8fa8" stroke="#3a7088" stroke-width="0.5"/>
<path d="M57.3,511 V585" stroke="#cacad2" stroke-width="1.2" stroke-dasharray="1.5,2"/>
<rect x="806.6" y="510.6" width="132.4" height="73.5" fill="url(#hatch)"/>
<path d="M64.8,543.8 H797.4" stroke="#22dd22" stroke-width="2.3" stroke-dasharray="3.6,3.03"/>
<path d="M64.8,552.3 H797.4" stroke="#f3b94c" stroke-width="1.5"/>
<path d="M64.8,560.2 H797.4" stroke="#ee1111" stroke-width="2.3" stroke-dasharray="3.6,3.03"/>
<polyline points="64.8,541.7 81.4,537.7 98.1,525.2 114.8,520.6 131.4,520.6 148.1,533.7 164.7,532.2 181.3,530.7 198.0,525.2 214.6,534.2 231.3,538.2 247.9,533.2 264.6,530.7 281.2,518.1 297.9,521.6 314.5,517.1 331.2,526.2 347.8,523.2 364.5,520.6 381.1,546.3 397.8,535.2 414.4,541.7 431.1,566.9 447.8,563.9 464.4,557.3 481.0,560.8 497.7,578.4 514.3,574.4 531.0,550.8 547.6,544.8 564.3,532.2 580.9,526.2 597.6,527.7 614.2,524.2 630.9,553.8 647.5,559.8 664.2,559.3 680.8,565.9 697.5,550.8 714.1,559.8 730.8,542.2 747.4,566.9 764.1,543.3 780.7,532.7 797.4,537.2" fill="none" stroke="#a8dcf5" stroke-width="3.6" stroke-linejoin="round" opacity="0.8"/>
<polyline points="64.8,541.7 81.4,537.7 98.1,525.2 114.8,520.6 131.4,520.6 148.1,533.7 164.7,532.2 181.3,530.7 198.0,525.2 214.6,534.2 231.3,538.2 247.9,533.2 264.6,530.7 281.2,518.1 297.9,521.6 314.5,517.1 331.2,526.2 347.8,523.2 364.5,520.6 381.1,546.3 397.8,535.2 414.4,541.7 431.1,566.9 447.8,563.9 464.4,557.3 481.0,560.8 497.7,578.4 514.3,574.4 531.0,550.8 547.6,544.8 564.3,532.2 580.9,526.2 597.6,527.7 614.2,524.2 630.9,553.8 647.5,559.8 664.2,559.3 680.8,565.9 697.5,550.8 714.1,559.8 730.8,542.2 747.4,566.9 764.1,543.3 780.7,532.7 797.4,537.2" fill="none" stroke="#1a3ae8" stroke-width="1.8" stroke-linejoin="round"/>
<text x="971.1" y="547.1" font-family="Liberation Sans, sans-serif" font-size="10" fill="#555" text-anchor="start" font-weight="normal" textLength="17.5" lengthAdjust="spacingAndGlyphs" >61.0</text>
<text x="971.7" y="589.6" font-family="Liberation Sans, sans-serif" font-size="10" fill="#555" text-anchor="start" font-weight="normal" textLength="17.3" lengthAdjust="spacingAndGlyphs" >11.0</text>
<rect x="2.3" y="591.2" width="993" height="7" fill="#fbfbfb"/>
<rect x="2.3" y="590.2" width="993" height="1" fill="#e2e2e2"/>
<rect x="16" y="592" width="1" height="6" fill="#999"/>
<path d="M8,598 l2.5,-3 l2.5,3 Z M25,598 l2,-2.5 l2,2.5Z" fill="#333"/>
<rect x="958" y="594.3" width="6" height="4" fill="#777"/><rect x="970" y="593.5" width="20" height="4.5" fill="#ececec"/>
<rect x="972" y="596.5" width="2" height="1.5" fill="#555"/><rect x="985" y="596" width="3" height="2" fill="#333"/>
</svg>
</body></html>
